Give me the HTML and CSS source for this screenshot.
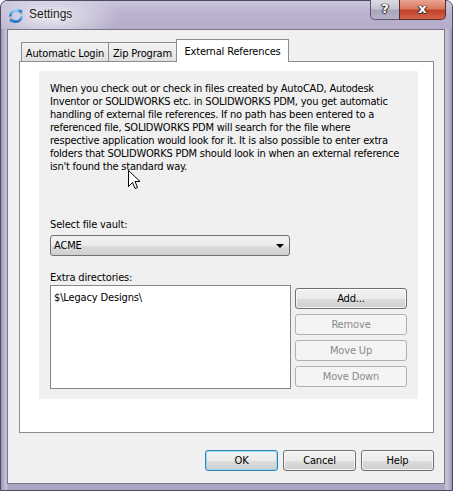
FILE: index.html
```html
<!DOCTYPE html>
<html>
<head>
<meta charset="utf-8">
<title>Settings</title>
<link rel="stylesheet" href="styles.css">
</head>
<body>
<div class="window">
  <div class="titlebar">
    <svg class="app-icon" width="16" height="16" viewBox="0 0 16 16">
      <defs>
        <linearGradient id="ib" x1="0" y1="0" x2="0" y2="1">
          <stop offset="0" stop-color="#8fd0f5"/>
          <stop offset="1" stop-color="#1f6fc0"/>
        </linearGradient>
      </defs>
      <path d="M2.5 8.5 A5.5 5.5 0 0 1 12 4.2" fill="none" stroke="url(#ib)" stroke-width="2.6"/>
      <path d="M10 1.5 L14.5 2.2 L13.2 6.6 Z" fill="#2b82d0"/>
      <path d="M13.5 7.5 A5.5 5.5 0 0 1 4 11.8" fill="none" stroke="url(#ib)" stroke-width="2.6"/>
      <path d="M6 14.5 L1.5 13.8 L2.8 9.4 Z" fill="#2b82d0"/>
    </svg>
    <span class="title">Settings</span>
    <div class="caption-btns">
      <div class="cap-btn help">?</div>
      <div class="cap-btn close">x</div>
    </div>
  </div>
  <div class="client">
    <div class="tabs">
      <div class="tab tab-login">Automatic Login</div>
      <div class="tab tab-zip">Zip Program</div>
      <div class="tab tab-ext selected">External References</div>
    </div>
    <div class="tab-panel">
      <div class="group">
        <p class="desc">When you check out or check in files created by AutoCAD, Autodesk<br>Inventor or SOLIDWORKS etc. in SOLIDWORKS PDM, you get automatic<br>handling of external file references. If no path has been entered to a<br>referenced file, SOLIDWORKS PDM will search for the file where<br>respective application would look for it. It is also possible to enter extra<br>folders that SOLIDWORKS PDM should look in when an external reference<br>isn't found the standard way.</p>
        <div class="label vault-label">Select file vault:</div>
        <div class="combo"><span class="combo-text">ACME</span><span class="combo-arrow"></span></div>
        <div class="label dirs-label">Extra directories:</div>
        <div class="dirs-row">
          <div class="listbox"><div class="list-item">$\Legacy Designs\</div></div>
          <div class="side-btns">
            <button class="btn">Add...</button>
            <button class="btn" disabled>Remove</button>
            <button class="btn" disabled>Move Up</button>
            <button class="btn" disabled>Move Down</button>
          </div>
        </div>
      </div>
    </div>
    <div class="dialog-btns">
      <button class="btn dlg default">OK</button>
      <button class="btn dlg">Cancel</button>
      <button class="btn dlg">Help</button>
    </div>
  </div>
</div>
<svg class="cursor" width="13" height="20" viewBox="0 0 13 20">
  <path d="M0.5 0.5 L0.5 16.5 L4.5 12.5 L7 18.5 L9.5 17.5 L7 11.5 L12 11.5 Z" fill="#fff" stroke="#000" stroke-width="1" stroke-linejoin="miter"/>
</svg>
</body>
</html>
```

FILE: styles.css
```css
* { box-sizing: border-box; }

html, body {
  margin: 0;
  padding: 0;
  background: #ffffff;
}

body {
  width: 453px;
  height: 491px;
  position: relative;
  overflow: hidden;
  font-family: "DejaVu Sans Condensed", "DejaVu Sans", sans-serif;
  font-stretch: condensed;
  font-size: 11px;
  letter-spacing: -0.15px;
  color: #000;
}

.window {
  width: 453px;
  height: 491px;
  border: 1px solid #4c4a5c;
  border-radius: 7px 7px 0 0;
  background:
    linear-gradient(90deg, #9c94b6 0px, #b9b2cd 3px, #c6c0d8 5px, rgba(0,0,0,0) 8px),
    linear-gradient(270deg, #9c94b6 0px, #bab3ce 3px, #c9c3da 6px, rgba(0,0,0,0) 8px),
    linear-gradient(180deg, #c2bbd4 0px, #b3abc8 30px, #aca4c3 100%);
  display: flex;
  flex-direction: column;
}

/* ---------- title bar ---------- */
.titlebar {
  height: 28px;
  display: flex;
  align-items: flex-start;
  padding-left: 7px;
  border-radius: 6px 6px 0 0;
  background:
    radial-gradient(ellipse 70px 26px at 50px 16px, rgba(236,234,242,0.95), rgba(236,234,242,0) 100%),
    linear-gradient(180deg, #cbc5dc 0px, #b9b1cd 14px, #b4acc9 28px);
}

.app-icon {
  margin-top: 7px;
  flex: none;
}

.title {
  margin-left: 5px;
  margin-top: 6px;
  font-family: "Liberation Sans", Arial, sans-serif;
  font-stretch: normal;
  letter-spacing: 0;
  font-size: 12px;
  line-height: 15px;
  color: #1b1b1b;
  text-shadow: 0 0 6px rgba(255,255,255,0.9);
}

.caption-btns {
  margin-left: auto;
  margin-right: 6px;
  margin-top: -1px;
  display: flex;
}

.cap-btn {
  height: 20px;
  border: 1px solid #5b5570;
  border-top: none;
  font-family: "DejaVu Sans", sans-serif;
  font-stretch: normal;
  letter-spacing: 0;
  font-weight: bold;
  color: #fff;
  text-align: center;
  line-height: 18px;
  text-shadow: 0 0 1px #222, 1px 0 1px #333, -1px 0 1px #333, 0 1px 1px #333;
}

.help {
  width: 29px;
  border-radius: 0 0 0 5px;
  border-right: none;
  font-size: 13px;
  background: linear-gradient(180deg, #dcdae4 0%, #c7c4d3 45%, #a9a5ba 55%, #b6b2c8 100%);
}

.close {
  width: 47px;
  border-radius: 0 0 5px 0;
  font-size: 13px;
  border-color: #5e2a22;
  background: linear-gradient(180deg, #e9a694 0%, #d97a62 45%, #c2412a 55%, #d1664c 100%);
}

/* ---------- client area ---------- */
.client {
  flex: none;
  margin: 0 7px 0 6px;
  height: 455px;
  border: 1px solid #7a7888;
  background: #f0f0f0;
  padding: 9px 10px 12px 11px;
  display: flex;
  flex-direction: column;
}

.tabs {
  display: flex;
  align-items: flex-end;
  height: 22px;
  padding-left: 2px;
  position: relative;
  z-index: 1;
}

.tab {
  height: 19px;
  border: 1px solid #898c95;
  border-bottom: none;
  background: linear-gradient(180deg, #f3f3f3 0%, #ebebeb 50%, #dfdfdf 100%);
  text-align: center;
  line-height: 13px;
  padding-top: 4px;
  white-space: nowrap;
}

.tab-login { width: 88px; }
.tab-zip { width: 68px; border-left: none; }

.tab.selected {
  width: 113px;
  height: 23px;
  margin-left: -1px;
  margin-bottom: -1px;
  background: #ffffff;
  padding-top: 5px;
}

.tab-panel {
  border: 1px solid #898c95;
  background: #ffffff;
  padding: 9px 15px 33px 19px;
}

.group {
  background: #f0f0f0;
  padding: 11px 11px 10px 11px;
}

.desc {
  margin: 0;
  line-height: 13px;
  letter-spacing: -0.22px;
  white-space: nowrap;
}

.label {
  line-height: 13px;
}

.vault-label { margin-top: 45px; }
.dirs-label { margin-top: 15px; }

.combo {
  margin-top: 4px;
  width: 240px;
  height: 21px;
  border: 1px solid #707070;
  border-radius: 3px;
  background: linear-gradient(180deg, #f2f2f2 0%, #ebebeb 50%, #dddddd 51%, #cfcfcf 100%);
  display: flex;
  align-items: center;
  padding: 0 5px 0 3px;
}

.combo-text {
  line-height: 13px;
}

.combo-arrow {
  margin-left: auto;
  width: 0;
  height: 0;
  border-left: 4px solid transparent;
  border-right: 4px solid transparent;
  border-top: 4px solid #000;
}

.dirs-row {
  margin-top: 1px;
  display: flex;
  align-items: flex-start;
}

.listbox {
  width: 241px;
  height: 104px;
  border: 1px solid #828790;
  background: #ffffff;
  padding: 5px 3px;
}

.list-item {
  line-height: 13px;
}

.side-btns {
  margin-left: 4px;
  margin-top: 3px;
  display: flex;
  flex-direction: column;
  gap: 5px;
}

.btn {
  font-family: "DejaVu Sans Condensed", "DejaVu Sans", sans-serif;
  font-stretch: condensed;
  font-size: 11px;
  letter-spacing: -0.15px;
  color: #000;
  height: 21px;
  width: 112px;
  padding: 0;
  border: 1px solid #707070;
  border-radius: 3px;
  background: linear-gradient(180deg, #f2f2f2 0%, #ebebeb 50%, #dddddd 51%, #cfcfcf 100%);
  box-shadow: inset 0 0 0 1px rgba(255,255,255,0.7);
  line-height: 13px;
}

.btn:disabled {
  color: #8a8a8a;
  border-color: #adb2b5;
  background: #f4f4f4;
  box-shadow: none;
}

.dialog-btns {
  margin-top: 17px;
  display: flex;
  justify-content: flex-end;
  gap: 5px;
}

.btn.dlg {
  width: 73px;
}

.btn.default {
  border-color: #3c7fb1;
  box-shadow: inset 0 0 0 1px #8fdcf6;
}

/* ---------- mouse cursor overlay ---------- */
.cursor {
  position: absolute;
  left: 128px;
  top: 170px;
}
```
